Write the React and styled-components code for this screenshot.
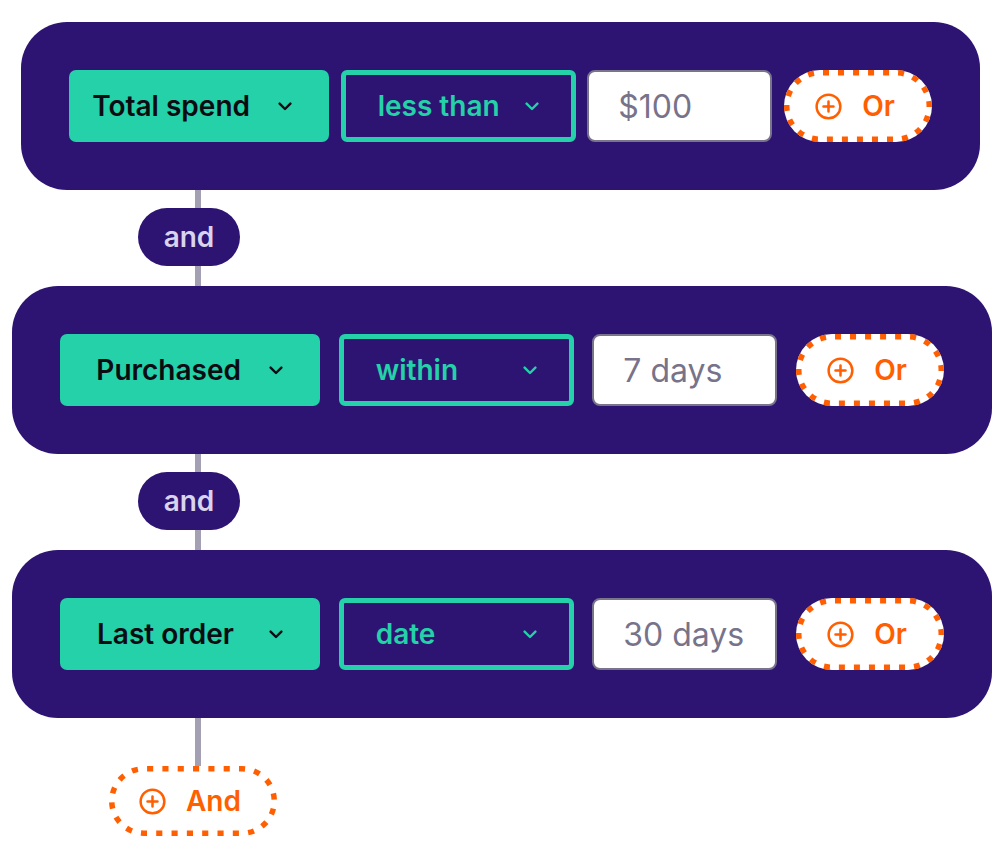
import React from 'react';
import styled, { createGlobalStyle } from 'styled-components';

const Global = createGlobalStyle`
  html, body { margin: 0; padding: 0; background: #ffffff; }
  body { font-family: Inter, "Noto Sans", sans-serif; -webkit-font-smoothing: antialiased; }
  * { box-sizing: border-box; }
`;

const NAVY = '#2d1472';
const TEAL = '#24d1a9';
const ORANGE = '#ff5f00';
const LINE = '#a3a0b3';

const Page = styled.div`
  width: 1002px;
  padding-top: 22px;
  padding-bottom: 24px;
  display: flex;
  flex-direction: column;
  align-items: flex-start;
`;

const Card = styled.div`
  margin-left: ${(p) => p.$left}px;
  width: ${(p) => p.$width}px;
  height: 168px;
  padding: 0 48px;
  background: ${NAVY};
  border-radius: 46px;
  display: flex;
  align-items: center;
  justify-content: space-between;
`;

const Field = styled.div`
  width: 260px;
  height: 72px;
  padding: 0 37px;
  border-radius: 7px;
  background: ${TEAL};
  color: #0b0b12;
  display: flex;
  align-items: center;
  justify-content: flex-end;
  gap: 28px;
  font: 600 28px/1 Inter, sans-serif;
  white-space: nowrap;
`;

const Operator = styled.div`
  width: 235px;
  height: 72px;
  padding: 0 32px;
  border: 5px solid ${TEAL};
  border-radius: 6px;
  color: ${TEAL};
  display: flex;
  align-items: center;
  justify-content: flex-end;
  gap: 24px;
  font: 600 28px/1 Inter, sans-serif;
  white-space: nowrap;
`;

const Label = styled.span`
  margin-right: auto;
  flex-shrink: 0;
`;

const ChevronSvg = styled.svg`
  flex-shrink: 0;
  display: block;
`;

const ValueInput = styled.input`
  width: 185px;
  height: 72px;
  padding: 0 0 0 29px;
  border: 2px solid #78748a;
  border-radius: 8px;
  background: #ffffff;
  color: #77738a;
  font: 400 32px/1 Inter, sans-serif;
  outline: none;
`;

const AddButton = styled.button`
  position: relative;
  width: ${(p) => p.$width}px;
  height: ${(p) => p.$height}px;
  padding: 0 6px 0 0;
  border: 0;
  border-radius: 999px;
  background: #ffffff;
  color: ${ORANGE};
  display: flex;
  align-items: center;
  justify-content: center;
  gap: 20px;
  font: 600 28px/1 Inter, sans-serif;
  cursor: pointer;
`;

const Outline = styled.svg`
  position: absolute;
  inset: 0;
  pointer-events: none;
`;

const Connector = styled.div`
  display: flex;
  flex-direction: column;
  align-items: flex-start;
`;

const Line = styled.div`
  margin-left: 195px;
  width: 6px;
  height: ${(p) => p.$h}px;
  background: ${LINE};
`;

const AndPill = styled.div`
  margin-left: 138px;
  width: 102px;
  height: 58px;
  border-radius: 29px;
  background: ${NAVY};
  color: #d9d3ee;
  display: flex;
  align-items: center;
  justify-content: center;
  font: 600 28px/1 Inter, sans-serif;
`;

const AndRow = styled.div`
  margin-left: 109px;
`;

const Chevron = ({ color }) => (
  <ChevronSvg width="14" height="9" viewBox="0 0 14 9" fill="none">
    <path d="M1.6 1.6 L7 7 L12.4 1.6" stroke={color} strokeWidth="2.4" strokeLinecap="round" strokeLinejoin="round" />
  </ChevronSvg>
);

const PlusCircle = () => (
  <svg width="27" height="27" viewBox="0 0 28 28" fill="none">
    <circle cx="14" cy="14" r="12.3" stroke={ORANGE} strokeWidth="2.6" />
    <path d="M14 8.8 V19.2 M8.8 14 H19.2" stroke={ORANGE} strokeWidth="2.6" strokeLinecap="round" />
  </svg>
);

const DottedOutline = ({ w, h, dots }) => {
  const sw = 5.5;
  const rw = w - sw;
  const rh = h - sw;
  return (
    <Outline width={w} height={h} viewBox={`0 0 ${w} ${h}`}>
      <rect
        x={sw / 2}
        y={sw / 2}
        width={rw}
        height={rh}
        rx={rh / 2}
        ry={rh / 2}
        fill="none"
        stroke={ORANGE}
        strokeWidth={sw}
        pathLength={dots * 10}
        strokeDasharray="4 6"
        strokeDashoffset="-2"
      />
    </Outline>
  );
};

const PlusButton = ({ label, w, h, dots }) => (
  <AddButton $width={w} $height={h}>
    <DottedOutline w={w} h={h} dots={dots} />
    <PlusCircle />
    <span>{label}</span>
  </AddButton>
);

const rules = [
  { field: 'Total spend', op: 'less than', value: '$100', left: 21, width: 959 },
  { field: 'Purchased', op: 'within', value: '7 days', left: 12, width: 980 },
  { field: 'Last order', op: 'date', value: '30 days', left: 12, width: 980 },
];

export default function App() {
  return (
    <>
      <Global />
      <Page>
        {rules.map((r, i) => (
          <React.Fragment key={r.field}>
            {i > 0 && (
              <Connector>
                <Line $h={18} />
                <AndPill>and</AndPill>
                <Line $h={20} />
              </Connector>
            )}
            <Card $left={r.left} $width={r.width}>
              <Field>
                <Label>{r.field}</Label>
                <Chevron color="#0b0b12" />
              </Field>
              <Operator>
                <Label>{r.op}</Label>
                <Chevron color={TEAL} />
              </Operator>
              <ValueInput readOnly value={r.value} />
              <PlusButton label="Or" w={148} h={72} dots={24} />
            </Card>
          </React.Fragment>
        ))}
        <Connector>
          <Line $h={48} />
        </Connector>
        <AndRow>
          <PlusButton label="And" w={168} h={70} dots={26} />
        </AndRow>
      </Page>
    </>
  );
}
